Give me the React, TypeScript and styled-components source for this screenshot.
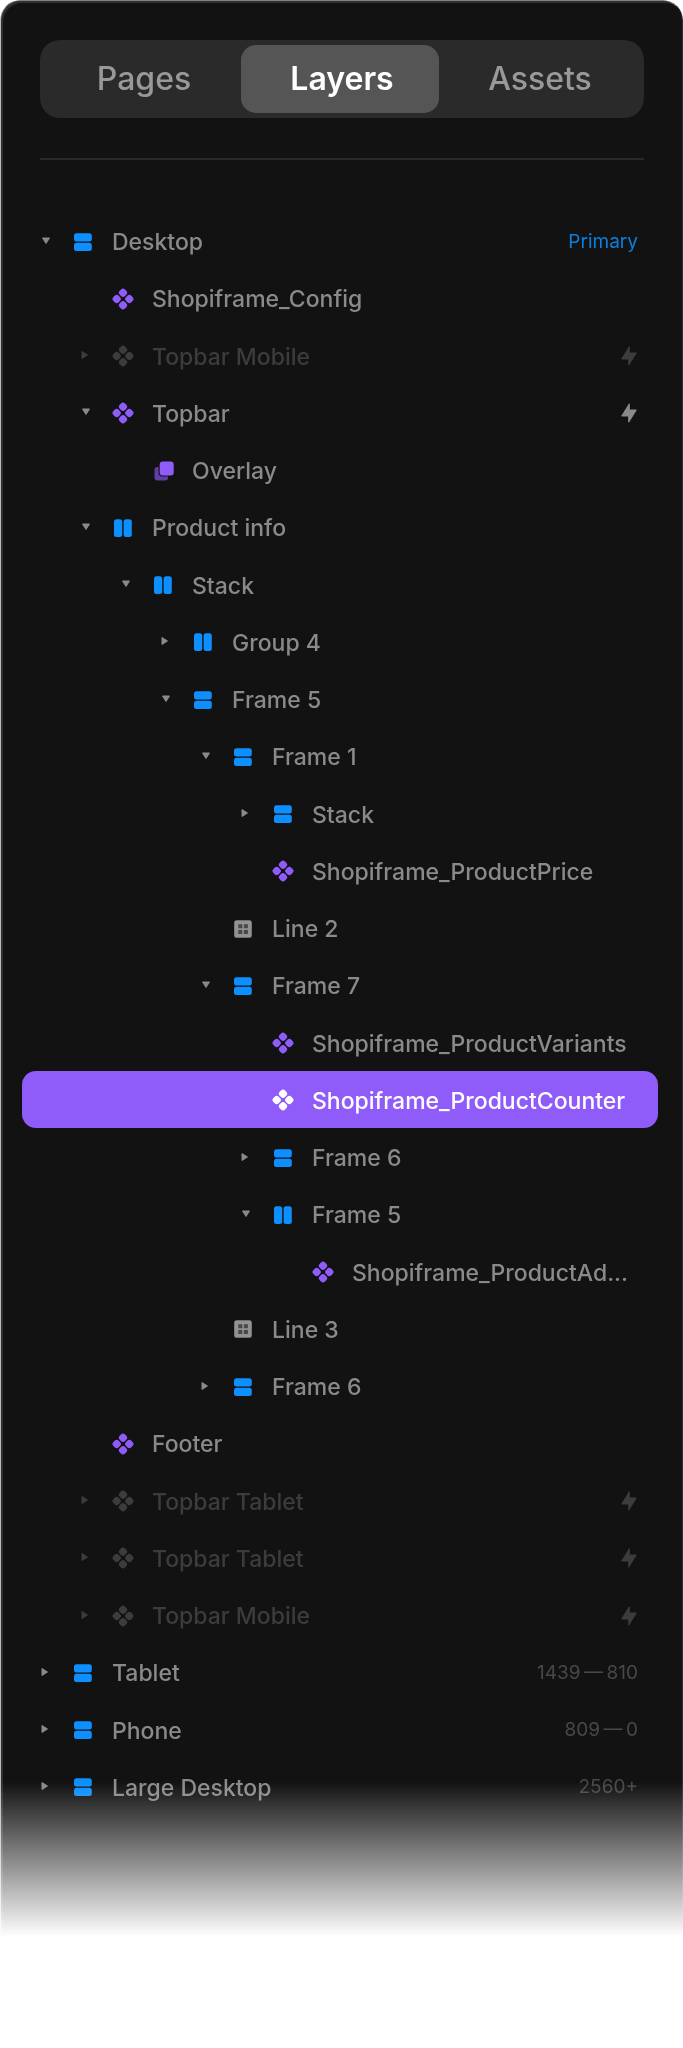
import React, { useState } from "react";
import styled, { createGlobalStyle, css } from "styled-components";

const GlobalStyle = createGlobalStyle`
  *, *::before, *::after { box-sizing: border-box; }
  body {
    margin: 0;
    background: #ffffff;
    font-family: Inter, "Liberation Sans", sans-serif;
  }
`;

const Panel = styled.main`
  width: 100%;
  padding: 39px 0 122px;
  background: #121212;
  border: 0 solid #7f8383;
  border-width: 1px 1px 0;
  border-left-color: #b8bcbc;
  border-right-color: #2c3236;
  border-radius: 20px 20px 0 0;
  box-shadow: inset 2px 2px 0 #2e3131;
  mask-image: linear-gradient(to bottom, #000 calc(100% - 155px), transparent);
`;

const Header = styled.header`
  margin: 0 38px 0 39px;
  padding-bottom: 40px;
  border-bottom: 2px solid #292929;
`;

const TabBar = styled.nav`
  display: grid;
  grid-template-columns: repeat(3, 1fr);
  padding: 5px 7px 5px 3px;
  background: #2a2a2a;
  border-radius: 20px;
`;

const Tab = styled.button<{ $active: boolean }>`
  height: 68px;
  padding: 0 0 0 4px;
  border: 0;
  border-radius: 15px;
  background: ${(p) => (p.$active ? "#555555" : "transparent")};
  color: ${(p) => (p.$active ? "#ffffff" : "#999999")};
  font: ${(p) => (p.$active ? 600 : 500)} 32px/40px Inter, "Liberation Sans", sans-serif;
  cursor: pointer;
`;

const Tree = styled.ul`
  display: grid;
  grid-auto-rows: minmax(57px, 1fr);
  min-height: 1603px;
  margin: 52px 24px 0 21px;
  padding: 0;
  list-style: none;
`;

const Row = styled.li<{ $level: number; $dim?: boolean; $selected?: boolean }>`
  display: flex;
  align-items: center;
  gap: 17px;
  padding: 2px 20px 0 ${(p) => 16 + p.$level * 40}px;
  border-radius: 14px;
  color: ${(p) => (p.$dim ? "#3c3c3c" : "#8a8a8a")};
  ${(p) =>
    p.$selected &&
    css`
      background: #8f5cfa;
      color: #ffffff;
    `}
`;

const Twisty = styled.button`
  display: flex;
  align-items: center;
  justify-content: center;
  width: 16px;
  height: 24px;
  padding: 0 0 2px;
  border: 0;
  background: none;
  color: inherit;
  cursor: pointer;
`;

const TwistySpace = styled.span`
  width: 16px;
`;

const Icon = styled.svg`
  flex: none;
  width: 24px;
  height: 24px;
`;

const Arrow = styled.svg`
  width: 16px;
  height: 16px;
`;

const Bolt = styled.svg`
  flex: none;
  width: 18px;
  height: 20px;
`;

const Name = styled.span`
  flex: 1;
  min-width: 0;
  padding-top: 1px;
  font-size: 23px;
  line-height: 28px;
  font-weight: 500;
  white-space: nowrap;
`;

const Meta = styled.span<{ $primary: boolean }>`
  font-size: 19px;
  line-height: 28px;
  color: ${(p) => (p.$primary ? "#0b7fe0" : "#484848")};
  white-space: nowrap;
`;

type Kind = "rows" | "columns" | "component" | "overlay" | "grid";

interface Layer {
  name: string;
  level: number;
  kind: Kind;
  arrow?: "open" | "closed";
  dim?: boolean;
  bolt?: boolean;
  meta?: string;
}

const layers: Layer[] = [
  { name: "Desktop", level: 0, kind: "rows", arrow: "open", meta: "Primary" },
  { name: "Shopiframe_Config", level: 1, kind: "component" },
  { name: "Topbar Mobile", level: 1, kind: "component", arrow: "closed", dim: true, bolt: true },
  { name: "Topbar", level: 1, kind: "component", arrow: "open", bolt: true },
  { name: "Overlay", level: 2, kind: "overlay" },
  { name: "Product info", level: 1, kind: "columns", arrow: "open" },
  { name: "Stack", level: 2, kind: "columns", arrow: "open" },
  { name: "Group 4", level: 3, kind: "columns", arrow: "closed" },
  { name: "Frame 5", level: 3, kind: "rows", arrow: "open" },
  { name: "Frame 1", level: 4, kind: "rows", arrow: "open" },
  { name: "Stack", level: 5, kind: "rows", arrow: "closed" },
  { name: "Shopiframe_ProductPrice", level: 5, kind: "component" },
  { name: "Line 2", level: 4, kind: "grid" },
  { name: "Frame 7", level: 4, kind: "rows", arrow: "open" },
  { name: "Shopiframe_ProductVariants", level: 5, kind: "component" },
  { name: "Shopiframe_ProductCounter", level: 5, kind: "component" },
  { name: "Frame 6", level: 5, kind: "rows", arrow: "closed" },
  { name: "Frame 5", level: 5, kind: "columns", arrow: "open" },
  { name: "Shopiframe_ProductAd...", level: 6, kind: "component" },
  { name: "Line 3", level: 4, kind: "grid" },
  { name: "Frame 6", level: 4, kind: "rows", arrow: "closed" },
  { name: "Footer", level: 1, kind: "component" },
  { name: "Topbar Tablet", level: 1, kind: "component", arrow: "closed", dim: true, bolt: true },
  { name: "Topbar Tablet", level: 1, kind: "component", arrow: "closed", dim: true, bolt: true },
  { name: "Topbar Mobile", level: 1, kind: "component", arrow: "closed", dim: true, bolt: true },
  { name: "Tablet", level: 0, kind: "rows", arrow: "closed", meta: "1439\u2009—\u2009810" },
  { name: "Phone", level: 0, kind: "rows", arrow: "closed", meta: "809\u2009—\u20090" },
  { name: "Large Desktop", level: 0, kind: "rows", arrow: "closed", meta: "2560+" },
];

const SELECTED = 15;

function LayerIcon({ kind, dim, selected }: { kind: Kind; dim?: boolean; selected: boolean }) {
  const accent = dim || selected ? "currentColor" : "#8f5cfa";
  return (
    <Icon viewBox="0 0 24 24" aria-hidden="true">
      {kind === "rows" && (
        <g fill="#0d8fff">
          <rect x="3" y="3.2" width="17.8" height="8.2" rx="2.5" />
          <rect x="3" y="12.8" width="17.8" height="8.2" rx="2.5" />
        </g>
      )}
      {kind === "columns" && (
        <g fill="#0d8fff">
          <rect x="3" y="3.2" width="8.2" height="17.8" rx="2.5" />
          <rect x="12.6" y="3.2" width="8.2" height="17.8" rx="2.5" />
        </g>
      )}
      {kind === "component" && (
        <g fill={accent}>
          {[[12, 5.7], [5.7, 12], [18.3, 12], [12, 18.3]].map(([x, y]) => (
            <rect
              key={`${x}-${y}`}
              x={x - 3.75}
              y={y - 3.75}
              width="7.5"
              height="7.5"
              rx="2.9"
              transform={`rotate(45 ${x} ${y})`}
            />
          ))}
        </g>
      )}
      {kind === "overlay" && (
        <>
          <path
            d="M7.5 8H6.500a3 3 0 0 0-3 3v7.500a3 3 0 0 0 3 3h7.500a3 3 0 0 0 3-3v-1h-5.500a4 4 0 0 1-4-4z"
            fill="#5f3fa3"
          />
          <rect x="8.7" y="2.500" width="14" height="14" rx="3" fill={accent} />
        </>
      )}
      {kind === "grid" && (
        <>
          <rect x="3.2" y="3.2" width="17.6" height="17.6" rx="2.5" fill="#929292" />
          <path d="M7.3 7.3h4v4h-4zM12.9 7.3h4v4h-4zM7.3 12.9h4v4h-4zM12.9 12.9h4v4h-4z" fill="#484848" />
        </>
      )}
    </Icon>
  );
}

function LayerRow({ layer, selected }: { layer: Layer; selected: boolean }) {
  return (
    <Row $level={layer.level} $dim={layer.dim} $selected={selected}>
      {layer.arrow ? (
        <Twisty aria-label={`Toggle ${layer.name}`} aria-expanded={layer.arrow === "open"}>
          <Arrow viewBox="0 0 16 16" aria-hidden="true">
            <path
              d={layer.arrow === "open" ? "M4.5 5h7L8 10.5z" : "M4 4.5v7L9.5 8z"}
              fill="currentColor"
              stroke="currentColor"
              strokeLinejoin="round"
            />
          </Arrow>
        </Twisty>
      ) : (
        <TwistySpace />
      )}
      <LayerIcon kind={layer.kind} dim={layer.dim} selected={selected} />
      <Name>{layer.name}</Name>
      {layer.meta && <Meta $primary={layer.meta === "Primary"}>{layer.meta}</Meta>}
      {layer.bolt && (
        <Bolt viewBox="0 0 18 20" aria-hidden="true">
          <path
            d="M9.3.8V7h7L8.7 19.2V13H1.7z"
            fill="currentColor"
            stroke="currentColor"
            strokeLinejoin="round"
          />
        </Bolt>
      )}
    </Row>
  );
}

export default function App() {
  const [tab, setTab] = useState("Layers");
  return (
    <>
      <GlobalStyle />
      <Panel>
        <Header>
          <TabBar>
            {["Pages", "Layers", "Assets"].map((t) => (
              <Tab key={t} $active={t === tab} onClick={() => setTab(t)}>
                {t}
              </Tab>
            ))}
          </TabBar>
        </Header>
        <Tree>
          {layers.map((layer, i) => (
            <LayerRow key={i} layer={layer} selected={i === SELECTED} />
          ))}
        </Tree>
      </Panel>
    </>
  );
}
